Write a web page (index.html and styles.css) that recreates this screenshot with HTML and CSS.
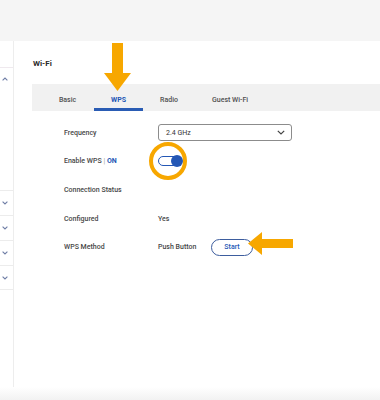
FILE: index.html
```html
<!DOCTYPE html>
<html lang="en">
<head>
    <meta charset="UTF-8">
    <meta name="viewport" content="width=device-width, initial-scale=1.0">
    <title>Wi-Fi - WPS</title>
    <link rel="stylesheet" href="styles.css">
</head>
<body>
    <div class="page">
        <div class="topbar"></div>

        <div class="layout">
            <nav class="sidebar">
                <div class="side-group">
                    <div class="side-head">
                        <svg class="chev" viewBox="0 0 6 4"><path d="M0.6 3.4 L3 1 L5.4 3.4"/></svg>
                    </div>
                </div>
                <div class="side-item"><svg class="chev" viewBox="0 0 6 4"><path d="M0.6 0.6 L3 3 L5.4 0.6"/></svg></div>
                <div class="side-item"><svg class="chev" viewBox="0 0 6 4"><path d="M0.6 0.6 L3 3 L5.4 0.6"/></svg></div>
                <div class="side-item"><svg class="chev" viewBox="0 0 6 4"><path d="M0.6 0.6 L3 3 L5.4 0.6"/></svg></div>
                <div class="side-item"><svg class="chev" viewBox="0 0 6 4"><path d="M0.6 0.6 L3 3 L5.4 0.6"/></svg></div>
            </nav>

            <main class="content">
                <h1 class="title">Wi-Fi</h1>

                <div class="tabs">
                    <div class="tab tab-basic">Basic</div>
                    <div class="tab tab-wps active">WPS</div>
                    <div class="tab tab-radio">Radio</div>
                    <div class="tab tab-guest">Guest Wi-Fi</div>
                </div>

                <div class="form">
                    <div class="row">
                        <div class="label">Frequency</div>
                        <div class="value">
                            <div class="select">
                                <span>2.4 GHz</span>
                                <svg class="select-chev" viewBox="0 0 8 5"><path d="M0.8 0.8 L4 4 L7.2 0.8"/></svg>
                            </div>
                        </div>
                    </div>
                    <div class="row">
                        <div class="label">Enable WPS <span class="sep">|</span> <span class="on">ON</span></div>
                        <div class="value">
                            <div class="toggle"><span class="knob"></span></div>
                        </div>
                    </div>
                    <div class="row">
                        <div class="label">Connection Status</div>
                        <div class="value"></div>
                    </div>
                    <div class="row">
                        <div class="label">Configured</div>
                        <div class="value">Yes</div>
                    </div>
                    <div class="row">
                        <div class="label">WPS Method</div>
                        <div class="value">
                            <span class="method-text">Push Button</span>
                            <button class="start-btn">Start</button>
                        </div>
                    </div>
                </div>
            </main>
        </div>

        <div class="footer-fade"></div>

        <!-- callouts drawn over the screen -->
        <svg class="callouts" viewBox="0 0 380 400">
            <path d="M112 43 H123 V73 H131 L117.5 91 L104 73 H112 Z"/>
            <circle cx="168" cy="161" r="17" fill="none" stroke="#f7a700" stroke-width="4"/>
            <path d="M248 243.5 L262 232 V239 H293 V248 H262 V255 Z"/>
        </svg>
    </div>
</body>
</html>
```

FILE: styles.css
```css
* {
    box-sizing: border-box;
}

body {
    margin: 0;
    font-family: Roboto, 'Noto Sans', sans-serif;
    background: #fff;
    color: #3a3a3a;
}

.page {
    position: relative;
    width: 380px;
    height: 400px;
    overflow: hidden;
    display: flex;
    flex-direction: column;
}

.topbar {
    height: 41px;
    background: #f5f5f5;
    flex-shrink: 0;
}

.layout {
    flex: 1;
    display: flex;
}

.sidebar {
    width: 14px;
    border-right: 1px solid #ededed;
    padding-top: 26px;
    flex-shrink: 0;
}

.side-group {
    height: 123px;
    border-top: 1px solid #efe9ee;
}

.side-head {
    height: 22px;
    display: flex;
    align-items: center;
    padding-left: 2px;
}

.side-item {
    height: 25px;
    border-top: 1px solid #ececec;
    display: flex;
    align-items: center;
    padding-left: 2px;
}

.side-item:last-child {
    border-bottom: 1px solid #ececec;
}

.chev {
    width: 6px;
    height: 4px;
    fill: none;
    stroke: #6f7ea6;
    stroke-width: 1.1;
}

.content {
    flex: 1;
    padding-left: 18px;
}

.title {
    margin: 0;
    padding: 18px 0 0 1px;
    height: 43px;
    font-size: 8px;
    line-height: 10px;
    font-weight: 700;
    color: #2b2b2b;
}

.tabs {
    display: flex;
    height: 27px;
    background: #f1f1f1;
    padding-left: 9px;
}

.tab {
    height: 27px;
    padding-top: 12px;
    font-size: 7px;
    line-height: 8px;
    font-weight: 500;
    color: #505050;
    text-align: center;
}

.tab-basic { width: 53px; }
.tab-wps { width: 49px; }
.tab-radio { width: 52px; }
.tab-guest { width: 70px; }

.tab.active {
    color: #2457b5;
    font-weight: 700;
    box-shadow: inset 0 -3px 0 #2a5cb4;
}

.form {
    padding: 7.5px 0 0 32px;
}

.row {
    display: flex;
    align-items: center;
    height: 28.6px;
    font-size: 7px;
    font-weight: 500;
}

.label {
    width: 94px;
    color: #474747;
}

.sep {
    color: #9a9a9a;
    font-weight: 400;
}

.on {
    color: #2457b5;
    font-weight: 700;
}

.value {
    display: flex;
    align-items: center;
    color: #474747;
}

.select {
    width: 134px;
    height: 17px;
    border: 1px solid #8c8c8c;
    border-radius: 3px;
    display: flex;
    align-items: center;
    justify-content: space-between;
    padding: 0 6px 0 7px;
    font-weight: 400;
    color: #333;
}

.select-chev {
    width: 8px;
    height: 5px;
    fill: none;
    stroke: #444;
    stroke-width: 1.2;
}

.toggle {
    width: 24px;
    height: 10px;
    border: 1.5px solid #2457b5;
    border-radius: 5px;
    background: #fff;
    display: flex;
    align-items: center;
    justify-content: flex-end;
}

.knob {
    width: 12px;
    height: 12px;
    border-radius: 50%;
    background: #2457b5;
    margin-right: -2px;
}

.method-text {
    width: 53px;
}

.start-btn {
    width: 42px;
    height: 17px;
    border: 1px solid #3d5d9e;
    border-radius: 9px;
    background: #fff;
    color: #2457b5;
    font-family: Roboto, 'Noto Sans', sans-serif;
    font-size: 7px;
    font-weight: 500;
    padding: 0;
}

.footer-fade {
    height: 13px;
    flex-shrink: 0;
    background: linear-gradient(#fff, #f2f2f2);
}

.callouts {
    position: absolute;
    top: 0;
    left: 0;
    width: 380px;
    height: 400px;
    fill: #f7a700;
    pointer-events: none;
}
```
